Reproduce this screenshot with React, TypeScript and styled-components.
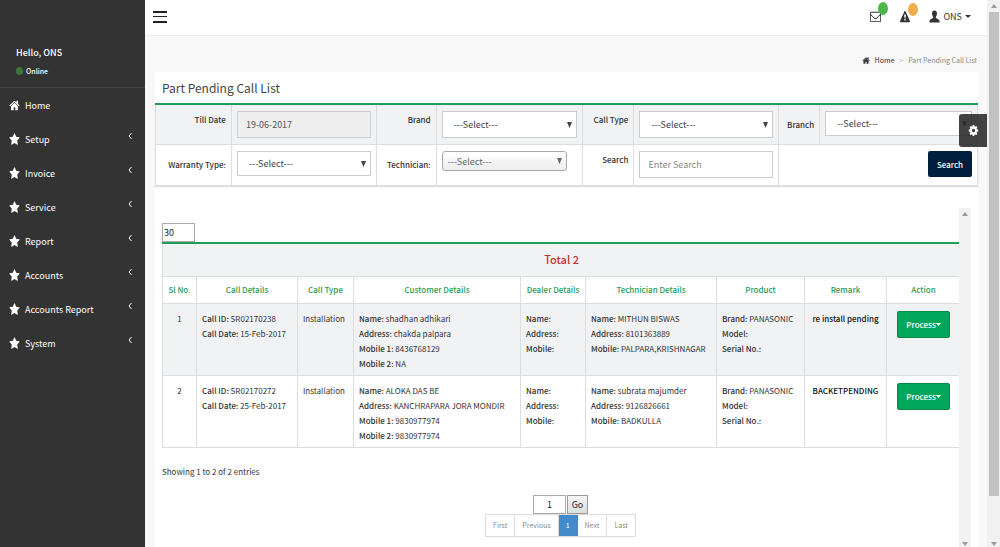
import React from 'react';
import styled, { createGlobalStyle, css } from 'styled-components';

const green = '#1f9d55';
const line = '#dcdfe1';

const GlobalStyle = createGlobalStyle`
  *, *::before, *::after { box-sizing: border-box; }
  body {
    margin: 0;
    background: #f8f8f8;
    color: #333;
    font-family: 'Noto Sans CJK SC', 'Open Sans', sans-serif;
    font-size: 8px;
    line-height: 15px;
  }
  input, select, button { font: inherit; color: inherit; margin: 0; }
  a { color: inherit; text-decoration: none; }
`;

const paths = {
  home: 'M1472 992v480q0 26-19 45t-45 19h-384v-384h-256v384h-384q-26 0-45-19t-19-45v-480q0-1 .5-3t.5-3l575-474 575 474q1 2 1 6zm223-69l-62 74q-8 9-21 11h-3q-13 0-21-7l-692-577-692 577q-12 8-24 7-13-2-21-11l-62-74q-8-10-7-23.5t11-21.5l719-599q32-26 76-26t76 26l244 204v-195q0-14 9-23t23-9h192q14 0 23 9t9 23v408l219 182q10 8 11 21.5t-7 23.5z',
  star: 'M1728 647q0 22-26 48l-363 354 86 500q1 7 1 20 0 21-10.5 35.5t-30.5 14.5q-19 0-40-12l-449-236-449 236q-22 12-40 12-21 0-31.5-14.5t-10.5-35.5q0-6 2-20l86-500-364-354q-25-27-25-48 0-37 56-46l502-73 225-455q19-41 49-41t49 41l225 455 502 73q56 9 56 46z',
  envelope: 'M1664 1504v-768q-32 36-69 66-268 206-426 338-51 43-83 67t-86.5 48.5-102.5 24.5h-2q-48 0-102.5-24.5t-86.5-48.5-83-67q-158-132-426-338-37-30-69-66v768q0 13 9.5 22.5t22.5 9.5h1472q13 0 22.5-9.5t9.5-22.5zm0-1051v-24.5l-.5-13-3-12.5-5.5-9-9-7.5-14-2.5h-1472q-13 0-22.5 9.5t-9.5 22.5q0 168 147 284 193 152 401 317 6 5 35 29.5t46 37.5 44.5 31.5 50.5 27.5 43 9h2q20 0 43-9t50.5-27.5 44.5-31.5 46-37.5 35-29.5q208-165 401-317 54-43 100.5-115.5t46.5-131.5zm128-37v1088q0 66-47 113t-113 47h-1472q-66 0-113-47t-47-113v-1088q0-66 47-113t113-47h1472q66 0 113 47t47 113z',
  warning: 'M1024 1375v-190q0-14-9.5-23.5t-22.5-9.5h-192q-13 0-22.5 9.5t-9.5 23.5v190q0 14 9.5 23.5t22.5 9.5h192q13 0 22.5-9.5t9.5-23.5zm-2-374l18-459q0-12-10-19-13-11-24-11h-220q-11 0-24 11-10 7-10 21l17 457q0 10 10 16.5t24 6.5h185q14 0 23.5-6.5t10.5-16.5zm-14-934l768 1408q35 63-2 126-17 29-46.5 46t-63.5 17h-1536q-34 0-63.5-17t-46.5-46q-37-63-2-126l768-1408q17-31 47-49t65-18 65 18 47 49z',
  user: 'M896 60c-260 0-400 170-400 420 0 170 60 340 160 440 30 40 40 160 0 190-180 100-420 160-530 300-60 80-60 200-60 300h1660c0-100 0-220-60-300-110-140-350-200-530-300-40-30-30-150 0-190 100-100 160-270 160-440 0-250-140-420-400-420z',
  cog: 'M1152 896q0-106-75-181t-181-75-181 75-75 181 75 181 181 75 181-75 75-181zm512-109v222q0 12-8 23t-20 13l-185 28q-19 54-39 91 35 50 107 138 10 12 10 25t-9 23q-27 37-99 108t-94 71q-12 0-26-9l-138-108q-44 23-91 38-16 136-29 186-7 28-36 28h-222q-14 0-24.5-8.5t-11.5-21.5l-28-184q-49-16-90-37l-141 107q-10 9-25 9-14 0-25-11-126-114-165-168-7-10-7-23 0-12 8-23 15-21 51-66.5t54-70.5q-27-50-41-99l-183-27q-13-2-21-12.5t-8-23.5v-222q0-12 8-23t19-13l186-28q14-46 39-92-40-57-107-138-10-12-10-24 0-10 9-23 26-36 98.5-107.5t94.5-71.5q13 0 26 10l138 107q44-23 91-38 16-136 29-186 7-28 36-28h222q14 0 24.5 8.5t11.5 21.5l28 184q49 16 90 37l142-107q9-9 24-9 13 0 25 10 129 119 165 170 7 8 7 22 0 12-8 23-15 21-51 66.5t-54 70.5q26 50 41 98l183 28q13 2 21 12.5t8 23.5z',
};

type IconName = keyof typeof paths;

const Svg = styled.svg`
  display: block;
  flex: none;
  fill: currentColor;
`;

const Icon = ({ name, w, h }: { name: IconName; w: number; h: number }) => (
  <Svg width={w} height={h} viewBox="0 0 1792 1792" preserveAspectRatio="none" aria-hidden="true">
    <path d={paths[name]} />
  </Svg>
);

const Triangle = ({ w, h, up }: { w: number; h: number; up?: boolean }) => (
  <Svg width={w} height={h} viewBox="0 0 10 10" preserveAspectRatio="none" aria-hidden="true">
    <path d={up ? 'M0 10L5 0L10 10z' : 'M0 0H10L5 10z'} />
  </Svg>
);

const Page = styled.div`
  display: flex;
  min-height: 100vh;
`;

/* Sidebar */
const Sidebar = styled.aside`
  flex: none;
  width: 145px;
  background: #333;
  color: #fff;
`;

const UserPanel = styled.div`
  height: 88px;
  padding: 45px 16px 0;
  border-bottom: 1px solid #444;
`;

const Greeting = styled.div`
  font-size: 9px;
  font-weight: 500;
  line-height: 16px;
`;

const Status = styled.div`
  display: flex;
  align-items: center;
  gap: 3px;
  margin-top: 2px;
  font-size: 7px;
  font-weight: 500;
  line-height: 16px;
`;

const OnlineDot = styled.span`
  width: 7px;
  height: 8px;
  border-radius: 50%;
  background: #3c763d;
`;

const NavItem = styled.a`
  display: flex;
  align-items: center;
  height: 34px;
  padding: 0 13px 0 9px;
  font-size: 9px;
  font-weight: 400;
`;

const NavLabel = styled.span`
  flex: 1;
  margin-left: 5px;
`;

const Chevron = styled.svg`
  margin-bottom: 6px;
  fill: none;
  stroke: currentColor;
`;

/* Header */
const Main = styled.div`
  flex: 1;
  min-width: 0;
  display: flex;
  flex-direction: column;
  position: relative;
`;

const Topbar = styled.header`
  display: flex;
  align-items: center;
  justify-content: space-between;
  height: 36px;
  padding: 0 16px 2px 7px;
  background: #fff;
  border-bottom: 1px solid #eee;
`;

const PlainButton = styled.button`
  display: flex;
  align-items: center;
  padding: 0;
  border: 0;
  background: none;
  cursor: pointer;
`;

const TopActions = styled.div`
  display: flex;
  align-items: center;
`;

const Alert = styled(PlainButton)`
  position: relative;
  margin-right: 19px;
`;

const Badge = styled.span<{ $color: string }>`
  position: absolute;
  left: 8px;
  top: -8px;
  width: 10px;
  height: 13px;
  border-radius: 50%;
  background: ${(p) => p.$color};
`;

const UserMenu = styled(PlainButton)`
  gap: 3px;
  font-size: 9px;
`;

const Breadcrumb = styled.nav`
  display: flex;
  align-items: center;
  justify-content: flex-end;
  gap: 5px;
  height: 36px;
  padding: 12px 10px 0;
  font-size: 7px;
  color: #888;
`;

const HomeLink = styled.a`
  display: flex;
  align-items: center;
  gap: 5px;
  color: #333;
`;

const Separator = styled.span`
  color: #bbb;
`;

/* Panel */
const Panel = styled.main`
  flex: 1;
  display: flex;
  flex-direction: column;
  margin: 0 9px 0 10px;
  background: #fff;
`;

const Title = styled.h1`
  margin: 0;
  height: 33px;
  padding-left: 7px;
  font-size: 12px;
  font-weight: 400;
  line-height: 32px;
  color: #444;
  border-bottom: 2px solid ${green};
`;

const Filters = styled.form`
  display: grid;
  grid-template-columns:
    minmax(0, 76fr) minmax(0, 145fr) minmax(0, 60fr) minmax(0, 147fr)
    minmax(0, 51fr) minmax(0, 145fr) minmax(0, 41fr) minmax(0, 157fr);
  grid-auto-rows: 40px;
  border: solid ${line};
  border-width: 0 1px 1px 1px;
  box-shadow: 0 1px 1px #ddd;
`;

const Cell = styled.div<{ $shade?: boolean; $last?: boolean; $wide?: boolean }>`
  padding: 6px 5px;
  background: ${(p) => (p.$shade ? '#f1f2f3' : '#fff')};
  border-right: ${(p) => (p.$last ? 0 : 1)}px solid ${line};
  border-bottom: ${(p) => (p.$shade ? 1 : 0)}px solid ${line};
  ${(p) => p.$wide && css`
    grid-column: span 2;
    display: flex;
    justify-content: flex-end;
  `}
`;

const LabelCell = styled(Cell)<{ $low?: boolean }>`
  padding: ${(p) => (p.$low ? 12 : 7)}px 5px 0 0;
  text-align: right;
  font-weight: 500;
  white-space: nowrap;
`;

const SelectBox = styled.div<{ $height: number; $styled?: boolean }>`
  display: grid;
  align-items: center;
  height: ${(p) => p.$height}px;
  font-size: 9px;
  color: #444;
  border: 1px solid #ccc;
  background: #fff;
  ${(p) => p.$styled && css`
    margin-right: 10px;
    border-color: #aaa;
    border-radius: 3px;
    background: linear-gradient(#fff 20%, #f4f4f4 50%, #eee);
    color: #666;
  `}
  & > * { grid-area: 1 / 1; }
  & > svg { justify-self: end; margin-right: 4px; pointer-events: none; }
`;

const Select = styled.select<{ $indent: number }>`
  appearance: none;
  width: 100%;
  height: 100%;
  padding: 0 0 0 ${(p) => p.$indent}px;
  border: 0;
  background: none;
`;

const TextInput = styled.input`
  width: 100%;
  height: 27px;
  padding: 0 8px;
  border: 1px solid #ccc;
  background: #fff;
  color: #555;
  font-size: 9px;
  &:read-only { background: #eee; }
  &::placeholder { color: #888; opacity: 1; }
`;

const SearchButton = styled.button`
  height: 26px;
  width: 44px;
  padding: 0;
  border: 0;
  border-radius: 2px;
  background: #001f3f;
  color: #fff;
  font-weight: 500;
`;

const ScrollArea = styled.section`
  flex: 1;
  display: flex;
  margin: 22px 7px 0 7px;
`;

const Listing = styled.div`
  flex: 1;
  min-width: 0;
  padding-top: 15px;
`;

const SmallInput = styled.input<{ $center?: boolean }>`
  display: block;
  width: 33px;
  height: 19px;
  padding: 0 1px;
  border: 1px solid #aaa;
  background: #fff;
  color: #222;
  font-size: 9px;
  text-align: ${(p) => (p.$center ? 'center' : 'left')};
`;

const Table = styled.table`
  width: 100%;
  table-layout: fixed;
  border-collapse: collapse;
  border-top: 2px solid ${green};
  border-bottom: 1px solid #ccc;
`;

const TotalCell = styled.th`
  height: 33px;
  padding: 0;
  background: #f1f2f3;
  border: 1px solid ${line};
  border-top: 2px solid ${green};
  color: #c9302c;
  font-size: 11px;
  font-weight: 500;
`;

const HeadCell = styled.th`
  height: 27px;
  padding: 0;
  border: 1px solid ${line};
  color: ${green};
  font-weight: 500;
  white-space: nowrap;
`;

const Row = styled.tr`
  height: 72px;
  &:nth-child(odd) { background: #f1f2f3; }
`;

const DataCell = styled.td<{ $center?: boolean; $strong?: boolean }>`
  padding: 7px 0 0 5px;
  border: 1px solid ${line};
  vertical-align: top;
  white-space: nowrap;
  ${(p) => p.$center && css`
    padding-left: 0;
    text-align: center;
  `}
  ${(p) => p.$strong && css`
    color: #111;
    font-weight: 500;
  `}
`;

const Key = styled.span`
  font-weight: 500;
`;

const ProcessButton = styled.button`
  display: inline-flex;
  align-items: center;
  justify-content: center;
  width: 53px;
  height: 27px;
  padding: 0;
  border: 1px solid #008d4c;
  border-radius: 2px;
  background: #00a65a;
  color: #fff;
  font-weight: 500;
`;

const Entries = styled.p`
  margin: 16px 0 0;
  line-height: 16px;
`;

const Pager = styled.div`
  display: flex;
  flex-direction: column;
  align-items: center;
  margin-top: 15px;
`;

const GoForm = styled.form`
  display: flex;
  gap: 1px;
`;

const GoButton = styled.button`
  width: 21px;
  height: 19px;
  padding: 0;
  border: 1px solid #999;
  background: linear-gradient(#f5f5f5, #ddd);
  color: #222;
  font-size: 9px;
`;

const PageLinks = styled.nav`
  display: flex;
  border: 1px solid #ddd;
  margin-bottom: 11px;
`;

const PageLink = styled.a<{ $active?: boolean }>`
  padding: 0 7px;
  font-size: 7px;
  line-height: 21px;
  color: ${(p) => (p.$active ? '#fff' : '#888')};
  background: ${(p) => (p.$active ? '#428bca' : '#fff')};
  border-right: 1px solid ${(p) => (p.$active ? '#428bca' : '#ddd')};
  &:last-child { border-right: 0; }
`;

/* Scroll tracks */
const Track = styled.div<{ $width: number }>`
  flex: none;
  display: flex;
  flex-direction: column;
  align-items: center;
  justify-content: space-between;
  width: ${(p) => p.$width}px;
  padding: 4px 0 2px;
  background: #f1f1f1;
  color: #999;
`;

const Thumb = styled.div`
  width: 10px;
  flex: 1;
  margin: 4px 0 46px;
  background: #c1c1c1;
`;

const SettingsButton = styled.button`
  position: absolute;
  top: 114px;
  right: 0;
  display: flex;
  align-items: center;
  justify-content: center;
  width: 28px;
  height: 33px;
  padding: 0;
  border: 0;
  border-radius: 3px 0 0 3px;
  background: rgba(40, 40, 40, 0.88);
  color: #fff;
`;

const Dropdown = ({ id, text = '---Select---', height = 27, chosen = false }: {
  id: string; text?: string; height?: number; chosen?: boolean;
}) => (
  <SelectBox $height={height} $styled={chosen}>
    <Select id={id} $indent={chosen ? 5 : 11}><option>{text}</option></Select>
    <Triangle w={5} h={6} />
  </SelectBox>
);

const menu = ['Setup', 'Invoice', 'Service', 'Report', 'Accounts', 'Accounts Report', 'System'];

const columns: [string, number][] = [
  ['Sl No.', 34], ['Call Details', 101], ['Call Type', 56], ['Customer Details', 167],
  ['Dealer Details', 65], ['Technician Details', 131], ['Product', 88], ['Remark', 82], ['Action', 74],
];

type Pair = [string, string];

const calls: { call: Pair[]; type: string; customer: Pair[]; dealer: Pair[]; technician: Pair[]; product: Pair[]; remark: string }[] = [
  {
    call: [['Call ID:', 'SR02170238'], ['Call Date:', '15-Feb-2017']],
    type: 'Installation',
    customer: [['Name:', 'shadhan adhikari'], ['Address:', 'chakda palpara'], ['Mobile 1:', '8436768129'], ['Mobile 2:', 'NA']],
    dealer: [['Name:', ''], ['Address:', ''], ['Mobile:', '']],
    technician: [['Name:', 'MITHUN BISWAS'], ['Address:', '8101363889'], ['Mobile:', 'PALPARA,KRISHNAGAR']],
    product: [['Brand:', 'PANASONIC'], ['Model:', ''], ['Serial No.:', '']],
    remark: 're install pending',
  },
  {
    call: [['Call ID:', 'SR02170272'], ['Call Date:', '25-Feb-2017']],
    type: 'Installation',
    customer: [['Name:', 'ALOKA DAS BE'], ['Address:', 'KANCHRAPARA JORA MONDIR'], ['Mobile 1:', '9830977974'], ['Mobile 2:', '9830977974']],
    dealer: [['Name:', ''], ['Address:', ''], ['Mobile:', '']],
    technician: [['Name:', 'subrata majumder'], ['Address:', '9126826661'], ['Mobile:', 'BADKULLA']],
    product: [['Brand:', 'PANASONIC'], ['Model:', ''], ['Serial No.:', '']],
    remark: 'BACKETPENDING',
  },
];

const Pairs = ({ items }: { items: Pair[] }) => (
  <>
    {items.map(([k, v]) => (
      <div key={k}><Key>{k}</Key> {v}</div>
    ))}
  </>
);

export default function App() {
  return (
    <Page>
      <GlobalStyle />
      <Sidebar>
        <UserPanel>
          <Greeting>Hello, ONS</Greeting>
          <Status><OnlineDot />Online</Status>
        </UserPanel>
        <nav>
          <NavItem href="#home"><Icon name="home" w={11} h={13} /><NavLabel>Home</NavLabel></NavItem>
          {menu.map((m) => (
            <NavItem href={`#${m}`} key={m}>
              <Icon name="star" w={11} h={13} />
              <NavLabel>{m}</NavLabel>
              <Chevron width="4" height="8" viewBox="0 0 4 8"><path d="M3.5 1L1 4L3.5 7" /></Chevron>
            </NavItem>
          ))}
        </nav>
      </Sidebar>

      <Main>
        <Topbar>
          <PlainButton aria-label="Toggle menu">
            <Svg width="16" height="13" viewBox="0 0 16 13">
              <path d="M1 1h14v2H1zM1 6h14v1H1zM1 11h14v2H1z" fill="#222" />
            </Svg>
          </PlainButton>
          <TopActions>
            <Alert aria-label="Messages"><Icon name="envelope" w={11} h={13} /><Badge $color="#4cb84c" /></Alert>
            <Alert aria-label="Alerts"><Icon name="warning" w={10} h={12} /><Badge $color="#f0ad4e" /></Alert>
            <UserMenu><Icon name="user" w={11} h={13} />ONS<Triangle w={6} h={3} /></UserMenu>
          </TopActions>
        </Topbar>

        <Breadcrumb aria-label="Breadcrumb">
          <HomeLink href="#home"><Icon name="home" w={8} h={9} />Home</HomeLink>
          <Separator>&gt;</Separator>
          <span>Part Pending Call List</span>
        </Breadcrumb>

        <Panel>
          <Title>Part Pending Call List</Title>
          <Filters>
            <LabelCell $shade><label htmlFor="till">Till Date</label></LabelCell>
            <Cell $shade><TextInput id="till" readOnly value="19-06-2017" /></Cell>
            <LabelCell $shade><label htmlFor="brand">Brand</label></LabelCell>
            <Cell $shade><Dropdown id="brand" /></Cell>
            <LabelCell $shade><label htmlFor="type">Call Type</label></LabelCell>
            <Cell $shade><Dropdown id="type" /></Cell>
            <LabelCell $shade $low><label htmlFor="branch">Branch</label></LabelCell>
            <Cell $shade $last><Dropdown id="branch" text="--Select---" height={25} /></Cell>
            <LabelCell $low><label htmlFor="warranty">Warranty Type:</label></LabelCell>
            <Cell><Dropdown id="warranty" height={25} /></Cell>
            <LabelCell $low><label htmlFor="technician">Technician:</label></LabelCell>
            <Cell><Dropdown id="technician" height={20} chosen /></Cell>
            <LabelCell><label htmlFor="search">Search</label></LabelCell>
            <Cell><TextInput id="search" placeholder="Enter Search" /></Cell>
            <Cell $last $wide><SearchButton type="button">Search</SearchButton></Cell>
          </Filters>

          <ScrollArea>
            <Listing>
              <SmallInput aria-label="Entries per page" defaultValue="30" />
              <Table>
                <colgroup>
                  {columns.map(([name, width]) => <col key={name} width={width} />)}
                </colgroup>
                <thead>
                  <tr><TotalCell colSpan={9}>Total 2</TotalCell></tr>
                  <tr>{columns.map(([name]) => <HeadCell key={name}>{name}</HeadCell>)}</tr>
                </thead>
                <tbody>
                  {calls.map((c, i) => (
                    <Row key={c.call[0][1]}>
                      <DataCell $center>{i + 1}</DataCell>
                      <DataCell><Pairs items={c.call} /></DataCell>
                      <DataCell>{c.type}</DataCell>
                      <DataCell><Pairs items={c.customer} /></DataCell>
                      <DataCell><Pairs items={c.dealer} /></DataCell>
                      <DataCell><Pairs items={c.technician} /></DataCell>
                      <DataCell><Pairs items={c.product} /></DataCell>
                      <DataCell $center $strong>{c.remark}</DataCell>
                      <DataCell $center>
                        <ProcessButton>Process<Triangle w={5} h={3} /></ProcessButton>
                      </DataCell>
                    </Row>
                  ))}
                </tbody>
              </Table>
              <Entries>Showing 1 to 2 of 2 entries</Entries>
              <Pager>
                <GoForm>
                  <SmallInput aria-label="Page number" defaultValue="1" $center />
                  <GoButton type="button">Go</GoButton>
                </GoForm>
                <PageLinks aria-label="Pagination">
                  <PageLink href="#first">First</PageLink>
                  <PageLink href="#previous">Previous</PageLink>
                  <PageLink href="#1" $active>1</PageLink>
                  <PageLink href="#next">Next</PageLink>
                  <PageLink href="#last">Last</PageLink>
                </PageLinks>
              </Pager>
            </Listing>
            <Track $width={12}><Triangle w={6} h={4} up /><Triangle w={6} h={4} /></Track>
          </ScrollArea>
        </Panel>
        <SettingsButton aria-label="Settings"><Icon name="cog" w={11} h={13} /></SettingsButton>
      </Main>
      <Track $width={13}>
        <Triangle w={6} h={4} up />
        <Thumb />
        <Triangle w={6} h={4} />
      </Track>
    </Page>
  );
}
